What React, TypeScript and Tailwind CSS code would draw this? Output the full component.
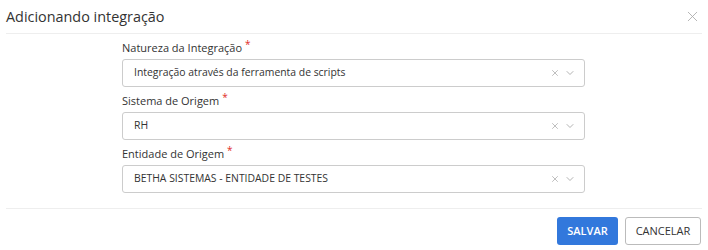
import { X, ChevronDown } from "lucide-react";

interface FieldProps {
    label: string;
    value: string;
}

function SelectField({ label, value }: FieldProps) {
    return (
        <div>
            <label className="mb-[2px] block text-[11px] leading-[18px] text-[#333]">
                {label}
                <span className="relative top-[-4px] ml-[3px] text-[10px] text-[#e02b27]">*</span>
            </label>
            <div className="flex h-[28px] w-[463px] items-center rounded-[3px] border border-[#ccc] bg-white pl-[11px] pr-[8px]">
                <span className="flex-1 truncate text-[10.4px] text-[#333]">{value}</span>
                <X size={10} strokeWidth={1.5} className="mr-[4px] text-[#999]" />
                <ChevronDown size={12} strokeWidth={1.5} className="text-[#999]" />
            </div>
        </div>
    );
}

export default function App() {
    return (
        <div className="h-[250px] w-[708px] bg-white font-['Open_Sans',sans-serif]">
            <div className="mx-[6px] flex h-[34px] items-center justify-between border-b border-[#eee] pr-[1px]">
                <h2 className="text-[14.4px] leading-[30px] text-[#333]">Adicionando integração</h2>
                <X size={17} strokeWidth={1.2} className="text-[#aaa]" />
            </div>

            <div className="flex h-[174px] flex-col gap-[5px] pl-[122px] pt-[5px]">
                <SelectField label="Natureza da Integração" value="Integração através da ferramenta de scripts" />
                <SelectField label="Sistema de Origem" value="RH" />
                <SelectField label="Entidade de Origem" value="BETHA SISTEMAS - ENTIDADE DE TESTES" />
            </div>

            <div className="mx-[6px] flex justify-end gap-[7px] border-t border-[#eee] pr-[1px] pt-[8px]">
                <button className="h-[28px] w-[61px] rounded-[3px] bg-[#3278dc] text-[11px] font-semibold text-white">
                    SALVAR
                </button>
                <button className="h-[28px] w-[76px] rounded-[3px] border border-[#bbb] bg-white text-[11px] text-[#333]">
                    CANCELAR
                </button>
            </div>
        </div>
    );
}
